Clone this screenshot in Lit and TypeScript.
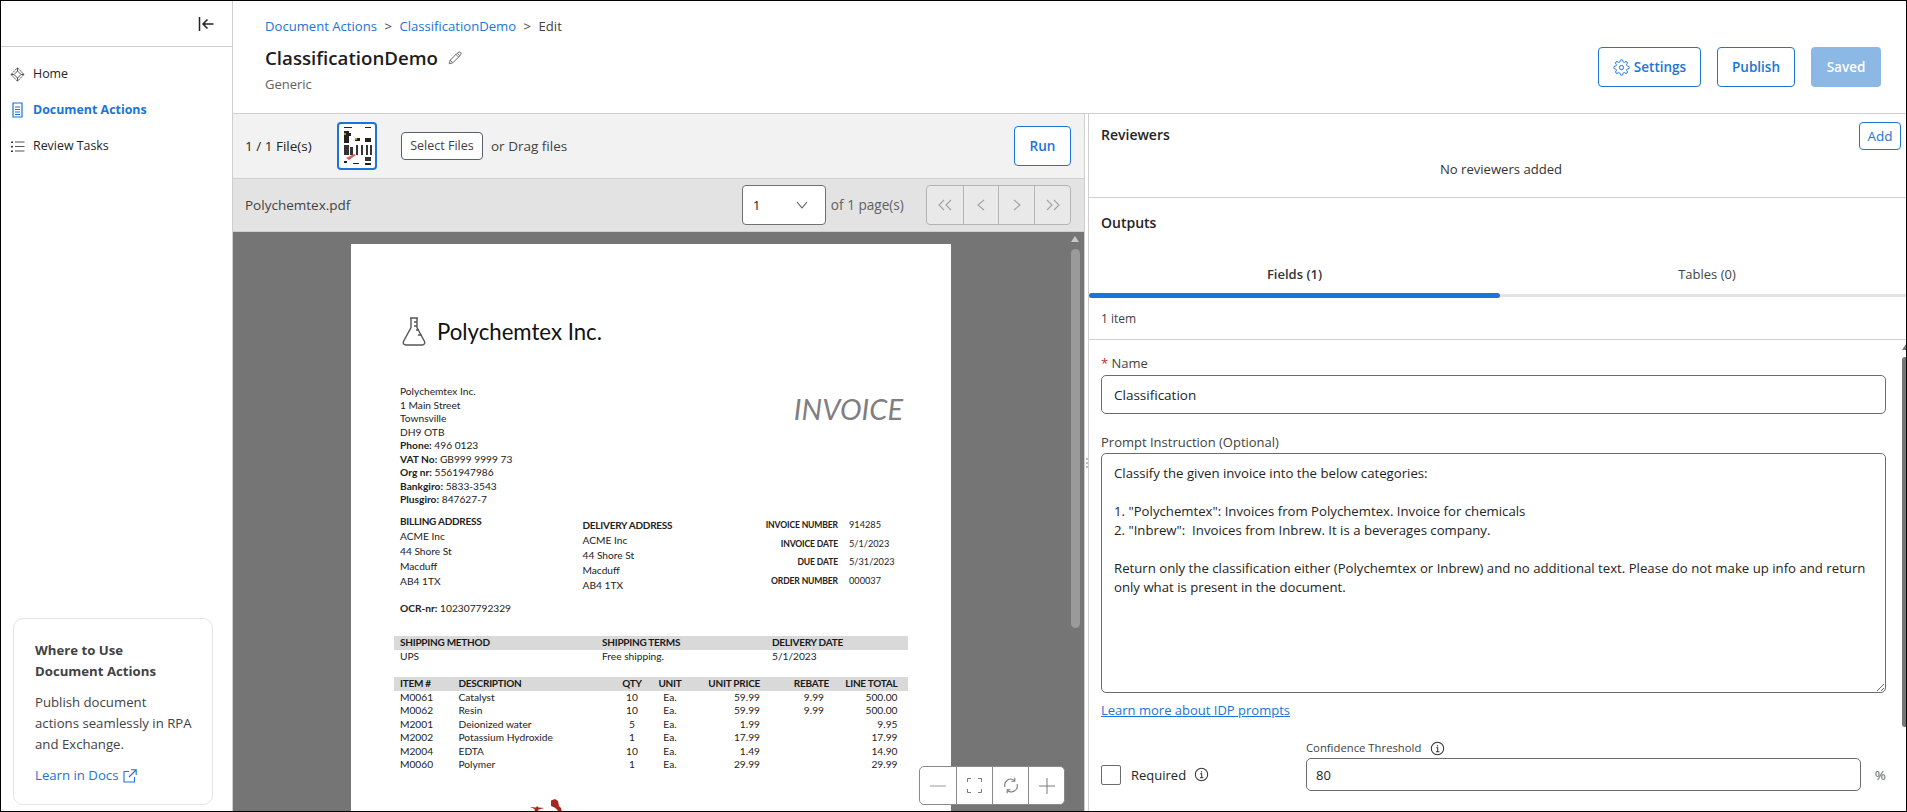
import { LitElement, css, html, svg } from "lit";
import { customElement } from "lit/decorators.js";

const PROMPT = `Classify the given invoice into the below categories:

1. "Polychemtex": Invoices from Polychemtex. Invoice for chemicals
2. "Inbrew":  Invoices from Inbrew. It is a beverages company.

Return only the classification either (Polychemtex or Inbrew) and no additional text. Please do not make up info and return only what is present in the document.`;

const ITEMS = [
  ["M0061", "Catalyst", "10", "59.99", "9.99", "500.00"],
  ["M0062", "Resin", "10", "59.99", "9.99", "500.00"],
  ["M2001", "Deionized water", "5", "1.99", "", "9.95"],
  ["M2002", "Potassium Hydroxide", "1", "17.99", "", "17.99"],
  ["M2004", "EDTA", "10", "1.49", "", "14.90"],
  ["M0060", "Polymer", "1", "29.99", "", "29.99"],
];

const ADDRESS = ["ACME Inc", "44 Shore St", "Macduff", "AB4 1TX"];

const infoIcon = html`<svg class="info" viewBox="0 0 16 16" fill="none" stroke="#333">
  <circle cx="8" cy="8" r="6.6" stroke-width="1.1"></circle>
  <path d="M6.6 7.2H8.2V11.4M6.4 11.4H10" stroke-width="1.1"></path>
  <path d="M7.4 4.4h1.2v1.3H7.4z" fill="#333" stroke="none"></path>
</svg>`;

const chev = (d: string) => svg`<path d=${d} fill="none" stroke="currentColor" stroke-width="1.1"></path>`;

@customElement("app-root")
export class AppRoot extends LitElement {
  static styles = css`
    :host {
      display: block;
      height: 100vh;
      font-family: "Open Sans", "Liberation Sans", sans-serif;
      font-size: 13.5px;
      line-height: 20px;
      color: #242424;
    }
    * {
      box-sizing: border-box;
    }
    svg {
      display: block;
      flex: none;
    }
    .frame {
      display: flex;
      height: 100%;
      border: 1px solid #000;
      overflow: hidden;
      background: #fff;
    }
    .side {
      display: flex;
      flex-direction: column;
      width: 232px;
      flex: none;
      border-right: 1px solid #cfcfcf;
    }
    .side-top {
      display: flex;
      justify-content: flex-end;
      align-items: center;
      height: 46px;
      padding-right: 18px;
      border-bottom: 1px solid #cfcfcf;
      flex: none;
    }
    .nav {
      padding-top: 9px;
      flex: 1;
    }
    .nav-item {
      display: flex;
      align-items: center;
      gap: 8px;
      height: 36px;
      padding-left: 9px;
      font-size: 12.4px;
    }
    .nav-item.active {
      color: #1b74d6;
      font-weight: 700;
    }
    .card {
      width: 200px;
      height: 187px;
      margin: 0 0 6px 12px;
      padding: 21px 4px 0 21px;
      border: 1px solid #e4e4e4;
      border-radius: 10px;
      font-size: 13.2px;
      line-height: 21px;
      color: #424242;
    }
    .card h4 {
      margin: 0 0 10px;
      font-size: 13.2px;
      font-weight: 700;
      color: #424242;
    }
    .card p {
      margin: 0 0 10px;
    }
    .card a {
      display: flex;
      align-items: center;
      gap: 5px;
      color: #1b74d6;
    }

    .main {
      flex: 1;
      min-width: 0;
      display: flex;
      flex-direction: column;
    }
    .head {
      display: flex;
      justify-content: space-between;
      height: 113px;
      flex: none;
      padding: 15px 25px 0 32px;
      border-bottom: 1px solid #cfcfcf;
    }
    .crumbs {
      display: flex;
      gap: 7.5px;
      font-size: 13.1px;
      color: #424242;
    }
    .crumbs a {
      color: #1b74d6;
    }
    .title {
      display: flex;
      align-items: center;
      gap: 10px;
      margin-top: 9px;
      font-size: 18.7px;
      line-height: 26px;
      font-weight: 600;
      color: #1c1c1c;
    }
    .sub {
      margin-top: 3px;
      font-size: 13px;
      color: #616161;
    }
    .actions {
      display: flex;
      gap: 16px;
      margin-top: 31px;
      align-self: flex-start;
    }
    .btn {
      display: flex;
      align-items: center;
      justify-content: center;
      gap: 4px;
      height: 40px;
      padding: 0 17px;
      border: 1px solid #1b74d6;
      border-radius: 4px;
      background: #fff;
      color: #1b74d6;
      font-size: 13.5px;
      font-weight: 600;
    }
    .btn.saved {
      width: 70px;
      padding: 0;
      border: none;
      background: #8cb8e6;
      color: #fff;
    }
    .btn.settings {
      width: 103px;
      padding: 0;
    }
    .btn.publish {
      width: 78px;
      padding: 0;
    }

    .body {
      flex: 1;
      display: flex;
      min-height: 0;
    }
    .left {
      width: 851px;
      flex: none;
      display: flex;
      flex-direction: column;
    }
    .bar1 {
      display: flex;
      align-items: center;
      height: 65px;
      flex: none;
      padding: 0 13px 0 12px;
      background: #f2f2f2;
      border-bottom: 1px solid #cfcfcf;
    }
    .count {
      width: 92px;
    }
    .thumb {
      width: 40px;
      height: 48px;
      border: 2px solid #1b74d6;
      border-radius: 4px;
      background: #fff;
      margin-right: 24px;
    }
    .select-files {
      display: flex;
      align-items: center;
      justify-content: center;
      width: 82px;
      height: 28px;
      border: 1px solid #56606e;
      border-radius: 4px;
      background: #fff;
      font-size: 12.5px;
      color: #424242;
    }
    .drag {
      margin-left: 8px;
      color: #424242;
    }
    .run {
      width: 57px;
      margin-left: auto;
      padding: 0;
    }
    .bar2 {
      display: flex;
      align-items: center;
      height: 53px;
      flex: none;
      padding: 0 13px 0 12px;
      background: #e3e3e3;
      border-bottom: 1px solid #cfcfcf;
      color: #424242;
    }
    .page-select {
      display: flex;
      align-items: center;
      justify-content: space-between;
      width: 84px;
      height: 40px;
      margin-left: auto;
      padding: 0 17px 0 10px;
      border: 1px solid #707070;
      border-radius: 4px;
      background: #fff;
      color: #242424;
    }
    .of {
      margin: 0 22px 0 5px;
      font-size: 13.6px;
      color: #616161;
    }
    .pager {
      display: flex;
      height: 40px;
      border: 1px solid #b4b4b4;
      border-radius: 4px;
      background: #e9e9e9;
      color: #a3a3a3;
    }
    .pager div {
      display: flex;
      align-items: center;
      justify-content: center;
      width: 35.8px;
    }
    .pager div + div {
      border-left: 1px solid #b4b4b4;
    }
    .viewer {
      position: relative;
      flex: 1;
      min-height: 0;
      padding: 12px 0 0 118px;
      background: #757575;
      overflow: hidden;
    }
    .vscroll {
      position: absolute;
      top: 0;
      right: 4px;
      bottom: 0;
      width: 10px;
    }
    .vscroll i {
      display: block;
      width: 0;
      margin: 4px auto 0;
      border-left: 4px solid transparent;
      border-right: 4px solid transparent;
      border-bottom: 6px solid #c8c8c8;
    }
    .vscroll b {
      display: block;
      width: 9px;
      height: 379px;
      margin: 7px auto 0;
      border-radius: 5px;
      background: #9a9a9a;
    }
    .zoombar {
      position: absolute;
      top: 534px;
      left: 686px;
      display: flex;
      height: 39px;
      border: 1px solid #8a8a8a;
      border-radius: 5px;
      background: #fff;
      color: #9a9a9a;
    }
    .zoombar div {
      display: flex;
      align-items: center;
      justify-content: center;
      width: 36px;
    }
    .zoombar div + div {
      border-left: 1px solid #8a8a8a;
    }

    .pdf {
      width: 600px;
      height: 800px;
      padding: 73px 48px 0 49px;
      background: #fff;
      font-family: Lato, "Liberation Sans", sans-serif;
      font-size: 10.2px;
      color: #222;
      overflow: hidden;
    }
    .pdf-logo {
      display: flex;
      align-items: center;
      gap: 11px;
      height: 29px;
      margin-left: 2px;
      font-size: 22.2px;
      color: #111;
    }
    .pdf-top {
      display: flex;
      justify-content: space-between;
      margin-top: 39px;
      line-height: 13.5px;
    }
    .pdf-inv {
      margin-top: 6px;
      font-size: 29px;
      line-height: 36px;
      font-style: italic;
      color: #7f7f7f;
    }
    .pdf-addr {
      display: grid;
      grid-template-columns: 182.5px 155px auto;
      margin-top: 7px;
      line-height: 15px;
    }
    .pdf-addr > div > b,
    .hd {
      font-size: 10px;
      letter-spacing: -0.25px;
    }
    .pdf-del {
      padding-top: 4px;
    }
    .pdf-ocr {
      margin-top: 12px;
    }
    .pdf-meta {
      display: grid;
      grid-template-columns: 100.5px auto;
      align-content: start;
      column-gap: 11px;
      padding-top: 2.5px;
      line-height: 18.5px;
      font-size: 9.2px;
    }
    .pdf-addr .pdf-meta b {
      font-size: 8.6px;
      letter-spacing: -0.15px;
      text-align: right;
      white-space: nowrap;
    }
    .ship,
    .items {
      display: grid;
      width: 514px;
      margin-left: -6.5px;
      line-height: 13.5px;
    }
    .ship {
      grid-template-columns: 202px 170px 142px;
      margin-top: 20.5px;
    }
    .items {
      grid-template-columns: 58.5px 160px 40px 36px 78px 69px 72.5px;
      margin-top: 13px;
    }
    .ship span,
    .items span {
      padding-left: 6.5px;
    }
    .hd {
      height: 14px;
      background: #d9d9d9;
      font-weight: 700;
      color: #1a1a1a;
    }
    .items .c {
      padding: 0;
      text-align: center;
    }
    .items .r {
      padding: 0 6px 0 0;
      text-align: right;
    }
    .items .reb {
      padding-right: 11px;
    }
    .items .tot {
      padding-right: 10px;
    }
    .stamp {
      margin: 26px 0 0 130px;
    }

    .split {
      display: flex;
      align-items: center;
      justify-content: center;
      width: 5px;
      flex: none;
      border-left: 1px solid #cfcfcf;
      border-right: 1px solid #cfcfcf;
    }
    .grip {
      width: 2px;
      height: 10px;
      border-left: 2px dotted #bdbdbd;
    }
    .right {
      position: relative;
      flex: 1;
      min-width: 0;
      display: flex;
      flex-direction: column;
    }
    .sec-title {
      font-size: 14px;
      font-weight: 600;
    }
    .rev {
      height: 84px;
      flex: none;
      padding: 8px 5px 0 12px;
      border-bottom: 1px solid #cfcfcf;
    }
    .rev-top {
      display: flex;
      justify-content: space-between;
      align-items: flex-start;
    }
    .rev-top .sec-title {
      margin-top: 3px;
    }
    .add {
      width: 42px;
      height: 28px;
      padding: 0;
      font-weight: 500;
    }
    .none {
      margin-top: 9px;
      font-size: 13.1px;
      text-align: center;
      color: #333;
    }
    .outputs {
      flex: none;
      padding: 15px 0 0;
    }
    .outputs .sec-title {
      padding-left: 12px;
    }
    .tabs {
      display: grid;
      grid-template-columns: 411px 1fr;
      margin-top: 31px;
    }
    .tab {
      text-align: center;
      color: #424242;
      font-size: 13px;
    }
    .tab.on {
      color: #333;
      font-weight: 600;
    }
    .tab:not(.on) span {
      padding-left: 8px;
    }
    .tab i {
      display: block;
      height: 3px;
      margin-top: 10px;
      background: #e3e3e3;
    }
    .tab.on i {
      height: 5px;
      margin-top: 9px;
      border-radius: 3px;
      background: #1b74d6;
    }
    .count-row {
      height: 42px;
      padding: 11px 0 0 12px;
      font-size: 12px;
      color: #424242;
      border-bottom: 1px solid #cfcfcf;
    }
    .form {
      padding: 14px 20px 0 12px;
    }
    .lbl {
      line-height: 18px;
      font-size: 13px;
      color: #424242;
    }
    .lbl em {
      font-style: normal;
      color: #c4262e;
    }
    .field {
      display: block;
      width: 100%;
      height: 39px;
      margin: 3px 0 19px;
      padding: 0 12px;
      border: 1px solid #6b6b6b;
      border-radius: 5px;
      background: #fff;
      font: inherit;
      color: #242424;
      outline: none;
    }
    textarea.field {
      height: 240px;
      margin: 2px 0 8px;
      padding: 10px 12px;
      line-height: 19px;
      white-space: pre-wrap;
      font-size: 13.2px;
      overflow: hidden;
    }
    .learn {
      display: block;
      line-height: 18px;
      font-size: 13px;
      color: #1b74d6;
      text-decoration: underline;
    }
    .bottom {
      display: flex;
      align-items: flex-end;
      margin-top: 21px;
    }
    .req {
      display: flex;
      align-items: center;
      width: 205px;
      height: 33px;
      flex: none;
      gap: 10px;
      font-size: 13px;
    }
    .req .info {
      margin-left: -2px;
    }
    .req i {
      width: 20px;
      height: 20px;
      border: 1px solid #6b6b6b;
      border-radius: 2px;
    }
    .info {
      width: 15px;
      height: 15px;
    }
    .conf {
      flex: 1;
    }
    .conf-lbl {
      display: flex;
      align-items: center;
      gap: 9px;
      height: 16px;
      margin-bottom: 2px;
      font-size: 11.3px;
      color: #424242;
    }
    .conf-row {
      display: flex;
      align-items: center;
      gap: 14px;
      color: #616161;
    }
    .conf-row .field {
      flex: 1;
      height: 33px;
      margin: 0;
      padding: 0 9px;
      font-size: 13px;
    }
    .fscroll {
      position: absolute;
      top: 230px;
      right: 0;
      width: 4px;
    }
    .fscroll i {
      display: block;
      width: 0;
      border-left: 4px solid transparent;
      border-bottom: 6px solid #777;
    }
    .fscroll b {
      display: block;
      height: 370px;
      margin-top: 7px;
      border-radius: 3px 0 0 3px;
      background: #777;
    }
  `;

  private renderPdf() {
    return html`<div class="pdf">
      <div class="pdf-logo">
        <svg width="24" height="29" viewBox="0 0 24 29" fill="none" stroke="#555" stroke-width="1.4">
          <path d="M8 1h8M9 1v9.5L1.6 24.2C.6 26.4 1.8 28 4 28h16c2.200 0 3.400-1.600 2.400-3.800L15 10.500V1"></path>
          <path d="M15 5h-3M15 9h-3M17 13h-3M19.500 18H16"></path>
        </svg>
        <span>Polychemtex Inc.</span>
      </div>
      <div class="pdf-top">
        <div>
          <div>Polychemtex Inc.</div>
          <div>1 Main Street</div>
          <div>Townsville</div>
          <div>DH9 OTB</div>
          <div><b>Phone:</b> 496 0123</div>
          <div><b>VAT No:</b> GB999 9999 73</div>
          <div><b>Org nr:</b> 5561947986</div>
          <div><b>Bankgiro:</b> 5833-3543</div>
          <div><b>Plusgiro:</b> 847627-7</div>
        </div>
        <div class="pdf-inv">INVOICE</div>
      </div>
      <div class="pdf-addr">
        <div>
          <b>BILLING ADDRESS</b>
          ${ADDRESS.map((l) => html`<div>${l}</div>`)}
          <div class="pdf-ocr"><b>OCR-nr:</b> 102307792329</div>
        </div>
        <div class="pdf-del">
          <b>DELIVERY ADDRESS</b>
          ${ADDRESS.map((l) => html`<div>${l}</div>`)}
        </div>
        <div class="pdf-meta">
          <b>INVOICE NUMBER</b><span>914285</span>
          <b>INVOICE DATE</b><span>5/1/2023</span>
          <b>DUE DATE</b><span>5/31/2023</span>
          <b>ORDER NUMBER</b><span>000037</span>
        </div>
      </div>
      <div class="ship">
        <span class="hd">SHIPPING METHOD</span><span class="hd">SHIPPING TERMS</span><span class="hd">DELIVERY DATE</span>
        <span>UPS</span><span>Free shipping.</span><span>5/1/2023</span>
      </div>
      <div class="items">
        <span class="hd">ITEM #</span>
        <span class="hd">DESCRIPTION</span>
        <span class="hd c">QTY</span>
        <span class="hd c">UNIT</span>
        <span class="hd r">UNIT PRICE</span>
        <span class="hd r">REBATE</span>
        <span class="hd r tot">LINE TOTAL</span>
        ${ITEMS.map(
          (r) => html`<span>${r[0]}</span><span>${r[1]}</span><span class="c">${r[2]}</span><span class="c">Ea.</span>
            <span class="r">${r[3]}</span><span class="r reb">${r[4]}</span><span class="r tot">${r[5]}</span>`,
        )}
      </div>
      <svg class="stamp" width="32" height="14" viewBox="0 0 32 14" fill="#a8281f">
        <path d="M0 9l6 .5 1-1.500 1.500 1.500 6 .5-6 1.500L8 14H5L4.500 11z"></path>
        <path d="M21 2.500l4-1.500 3 2 1 5 2 2 1 4h-4l-.500-2-3-2.500-3.500-1.500z"></path>
      </svg>
    </div>`;
  }

  render() {
    return html`<div class="frame">
      <aside class="side">
        <div class="side-top">
          <svg width="16" height="14" viewBox="0 0 16 14" fill="none" stroke="#242424" stroke-width="1.5">
            <path d="M1.500 0v14M15.500 7H5M9.500 2.500L5 7l4.500 4.500"></path>
          </svg>
        </div>
        <nav class="nav">
          <div class="nav-item">
            <svg width="15" height="15" viewBox="0 0 15 15" fill="none" stroke="#555" stroke-width="1">
              <path d="M7.500 .8L14 7.500 7.500 14.200 1 7.500z" stroke-dasharray="2.400 .7"></path>
              <path d="M7.500 4L11 7.500 7.500 11 4 7.500zM1 7.500h3M11 7.500h3M7.500 .8V4M7.500 11v3.200"></path>
            </svg>
            <span>Home</span>
          </div>
          <div class="nav-item active">
            <svg width="15" height="16" viewBox="0 0 15 16" fill="none" stroke="#1b74d6" stroke-width="1.2">
              <path d="M3 1h9v14H3zM5 5h5M5 7.500h5M5 10h5M5 12.500h5"></path>
            </svg>
            <span>Document Actions</span>
          </div>
          <div class="nav-item">
            <svg width="15" height="15" viewBox="0 0 15 15" fill="none" stroke="#555" stroke-width="1">
              <path d="M5 3h9.500M5 7.500h9.500M5 12h9.500"></path>
              <path d="M1 2.500h2v1.500H1zM1 7h2v1.500H1zM1 11.500h2V13H1z" fill="#333" stroke="none"></path>
            </svg>
            <span>Review Tasks</span>
          </div>
        </nav>
        <div class="card">
          <h4>Where to Use<br />Document Actions</h4>
          <p>Publish document<br />actions seamlessly in RPA<br />and Exchange.</p>
          <a>
            <span>Learn in Docs</span>
            <svg width="14" height="14" viewBox="0 0 14 14" fill="none" stroke="#1b74d6" stroke-width="1.1">
              <path d="M6 2.500H1v10.500h10.500V8M8 .8h5.200V6M13 1L6 8"></path>
            </svg>
          </a>
        </div>
      </aside>
      <div class="main">
        <header class="head">
          <div>
            <div class="crumbs">
              <a>Document Actions</a><span>&gt;</span><a>ClassificationDemo</a><span>&gt;</span><span>Edit</span>
            </div>
            <div class="title">
              <span>ClassificationDemo</span>
              <svg width="14" height="14" viewBox="0 0 14 14" fill="none" stroke="#6d6d6d" stroke-width="1">
                <path d="M1.200 12.800l1-3.600 7-7 2.600 2.600-7 7zM2.200 9.200l2.600 2.600M8 3.500l2.500 2.500M9.500 1.800L12 .8l1.200 1.200-1 2.600"></path>
              </svg>
            </div>
            <div class="sub">Generic</div>
          </div>
          <div class="actions">
            <div class="btn settings">
              <svg width="17" height="17" viewBox="0 0 24 24" fill="none" stroke="#1b74d6" stroke-width="1.4">
                <circle cx="12" cy="12" r="3"></circle>
                <path d="M19.400 15a1.650 1.650 0 0 0 .33 1.820l.06.06a2 2 0 0 1 0 2.830 2 2 0 0 1-2.830 0l-.06-.06a1.650 1.650 0 0 0-1.820-.33 1.650 1.650 0 0 0-1 1.510V21a2 2 0 0 1-2 2 2 2 0 0 1-2-2v-.09A1.650 1.650 0 0 0 9 19.400a1.650 1.650 0 0 0-1.820.33l-.06.06a2 2 0 0 1-2.830 0 2 2 0 0 1 0-2.830l.06-.06a1.650 1.650 0 0 0 .33-1.820 1.650 1.650 0 0 0-1.510-1H3a2 2 0 0 1-2-2 2 2 0 0 1 2-2h.09A1.650 1.650 0 0 0 4.600 9a1.650 1.650 0 0 0-.33-1.820l-.06-.06a2 2 0 0 1 0-2.830 2 2 0 0 1 2.830 0l.06.06a1.650 1.650 0 0 0 1.820.33H9a1.650 1.650 0 0 0 1-1.510V3a2 2 0 0 1 2-2 2 2 0 0 1 2 2v.09a1.650 1.650 0 0 0 1 1.510 1.650 1.650 0 0 0 1.820-.33l.06-.06a2 2 0 0 1 2.830 0 2 2 0 0 1 0 2.830l-.06.06a1.650 1.650 0 0 0-.33 1.820V9a1.650 1.650 0 0 0 1.510 1H21a2 2 0 0 1 2 2 2 2 0 0 1-2 2h-.09a1.650 1.650 0 0 0-1.510 1z"></path>
              </svg>
              <span>Settings</span>
            </div>
            <div class="btn publish">Publish</div>
            <div class="btn saved">Saved</div>
          </div>
        </header>
        <div class="body">
          <section class="left">
            <div class="bar1">
              <span class="count">1 / 1 File(s)</span>
              <div class="thumb">
                <svg width="36" height="44" viewBox="0 0 36 44">
                  <path d="M5 3h8v1H5zM26 3h6v1h-6zM5 7h5v12H5zM10 9h2v3h-2zM16 14h5v3h-5zM26 14h6v4h-6z" fill="#222"></path>
                  <path d="M5 21h5v10H5zM11 23h3v8h-3zM17 21h2v10h-2zM22 21h2v10h-2zM27 21h2v10h-2zM31 21h2v10h-2zM26 33h6v4h-6z" fill="#333"></path>
                  <path d="M5 37h3v2H5zM14 39h6v1h-6zM26 39h6v2h-6z" fill="#222"></path>
                  <path d="M7 34l8-4 2 1-7 5z" fill="#d0665c"></path>
                  <path d="M16 14h2v2h-2zM5 9h2v2H5z" fill="#c98a2e"></path>
                </svg>
              </div>
              <div class="select-files">Select Files</div>
              <span class="drag">or Drag files</span>
              <div class="btn run">Run</div>
            </div>
            <div class="bar2">
              <span>Polychemtex.pdf</span>
              <div class="page-select">
                <span>1</span>
                <svg width="12" height="8" viewBox="0 0 12 8" fill="none" stroke="#555" stroke-width="1.1">
                  <path d="M1 1l5 6 5-6"></path>
                </svg>
              </div>
              <span class="of">of 1 page(s)</span>
              <div class="pager">
                <div><svg width="16" height="12" viewBox="0 0 16 12">${chev("M7 1L2 6l5 5M14 1L9 6l5 5")}</svg></div>
                <div><svg width="10" height="12" viewBox="0 0 10 12">${chev("M8 1L2 6l6 5")}</svg></div>
                <div><svg width="10" height="12" viewBox="0 0 10 12">${chev("M2 1l6 5-6 5")}</svg></div>
                <div><svg width="16" height="12" viewBox="0 0 16 12">${chev("M2 1l5 5-5 5M9 1l5 5-5 5")}</svg></div>
              </div>
            </div>
            <div class="viewer">
              ${this.renderPdf()}
              <div class="vscroll"><i></i><b></b></div>
              <div class="zoombar">
                <div><svg width="16" height="2" viewBox="0 0 16 2"><path d="M0 1h16" stroke="currentColor"></path></svg></div>
                <div>
                  <svg width="15" height="15" viewBox="0 0 15 15" fill="none" stroke="#7a7a7a">
                    <path d="M.5 4V.5H4M11 .5h3.500V4M14.500 11v3.500H11M4 14.500H.5V11"></path>
                  </svg>
                </div>
                <div>
                  <svg width="16" height="17" viewBox="0 0 16 17" fill="none" stroke="#7a7a7a" stroke-width="1.1">
                    <path d="M2 10a6 6 0 0 1 9.500-6.500M14 7a6 6 0 0 1-9.500 6.500"></path>
                    <path d="M11.800.8v3.400H8.400M4.200 16.200v-3.400h3.400"></path>
                  </svg>
                </div>
                <div><svg width="16" height="16" viewBox="0 0 16 16"><path d="M0 8h16M8 0v16" stroke="#7a7a7a"></path></svg></div>
              </div>
            </div>
          </section>
          <div class="split"><div class="grip"></div></div>
          <section class="right">
            <div class="rev">
              <div class="rev-top">
                <span class="sec-title">Reviewers</span>
                <div class="btn add">Add</div>
              </div>
              <div class="none">No reviewers added</div>
            </div>
            <div class="outputs">
              <div class="sec-title">Outputs</div>
              <div class="tabs">
                <div class="tab on"><span>Fields (1)</span><i></i></div>
                <div class="tab"><span>Tables (0)</span><i></i></div>
              </div>
              <div class="count-row">1 item</div>
            </div>
            <div class="form">
              <div class="lbl"><em>*</em> Name</div>
              <input class="field" .value=${"Classification"} />
              <div class="lbl">Prompt Instruction (Optional)</div>
              <textarea class="field" .value=${PROMPT}></textarea>
              <a class="learn">Learn more about IDP prompts</a>
              <div class="bottom">
                <div class="req"><i></i><span>Required</span>${infoIcon}</div>
                <div class="conf">
                  <div class="conf-lbl"><span>Confidence Threshold</span>${infoIcon}</div>
                  <div class="conf-row">
                    <input class="field" .value=${"80"} />
                    <span>%</span>
                  </div>
                </div>
              </div>
            </div>
            <div class="fscroll"><i></i><b></b></div>
          </section>
        </div>
      </div>
    </div>`;
  }
}
